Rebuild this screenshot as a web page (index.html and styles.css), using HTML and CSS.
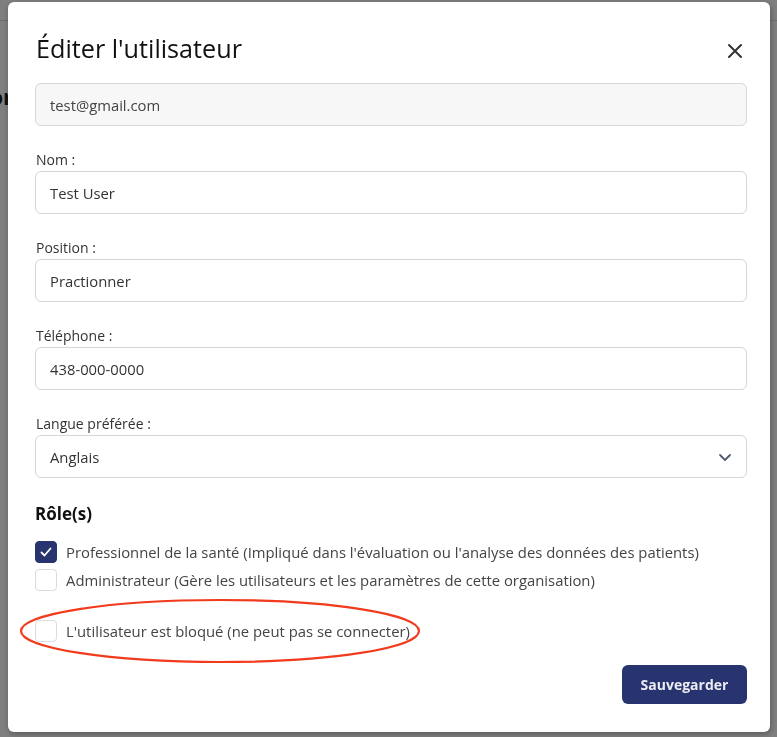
FILE: index.html
```html
<!DOCTYPE html>
<html lang="fr">
<head>
    <meta charset="UTF-8">
    <meta name="viewport" content="width=device-width, initial-scale=1.0">
    <title>Éditer l'utilisateur</title>
    <link rel="stylesheet" href="styles.css">
</head>
<body>
    <div class="page">
        <div class="page-top">Organisation</div>
        <h2 class="page-title">Utilisateurs de l'organisation</h2>
        <p class="page-text">liste des utilisateurs</p>
    </div>

    <div class="backdrop"></div>

    <div class="modal">
        <div class="modal-header">
            <h1>Éditer l'utilisateur</h1>
            <button class="close" aria-label="Fermer">
                <svg width="16" height="16" viewBox="0 0 16 16">
                    <path d="M2 2 L14 14 M14 2 L2 14" stroke="#333" stroke-width="2" stroke-linecap="round"/>
                </svg>
            </button>
        </div>

        <div class="field">
            <div class="input readonly">test@gmail.com</div>
        </div>

        <div class="field">
            <label>Nom :</label>
            <div class="input">Test User</div>
        </div>

        <div class="field">
            <label>Position :</label>
            <div class="input">Practionner</div>
        </div>

        <div class="field">
            <label>Téléphone :</label>
            <div class="input">438-000-0000</div>
        </div>

        <div class="field">
            <label>Langue préférée :</label>
            <div class="input select">
                <span>Anglais</span>
                <svg width="14" height="14" viewBox="0 0 14 14">
                    <path d="M2 5 L7 10 L12 5" fill="none" stroke="#555b6e" stroke-width="1.8" stroke-linecap="round" stroke-linejoin="round"/>
                </svg>
            </div>
        </div>

        <h3 class="roles-title">Rôle(s)</h3>

        <div class="roles">
            <div class="check-row">
                <span class="box checked">
                    <svg width="14" height="14" viewBox="0 0 14 14">
                        <path d="M2.5 7.5 L5.5 10.5 L11.5 3.5" fill="none" stroke="#fff" stroke-width="1.8" stroke-linecap="round" stroke-linejoin="round"/>
                    </svg>
                </span>
                Professionnel de la santé (Impliqué dans l'évaluation ou l'analyse des données des patients)
            </div>
            <div class="check-row">
                <span class="box"></span>
                Administrateur (Gère les utilisateurs et les paramètres de cette organisation)
            </div>
        </div>

        <div class="check-row blocked">
            <span class="box"></span>
            L'utilisateur est bloqué (ne peut pas se connecter)
            <svg class="circle" width="404" height="68" viewBox="0 0 404 68">
                <ellipse cx="202" cy="34" rx="199" ry="31" fill="none" stroke="#f23a1c" stroke-width="2.2"/>
            </svg>
        </div>

        <div class="actions">
            <button class="save">Sauvegarder</button>
        </div>
    </div>
</body>
</html>
```

FILE: styles.css
```css
body {
    margin: 0;
    height: 100vh;
    overflow: hidden;
    background-color: #fff;
    font-family: "Open Sans", "Noto Sans", Arial, sans-serif;
    color: #333;
}

.page {
    margin-left: -190px;
}

.page-top {
    height: 20px;
    border-bottom: 1px solid #ddd;
    font-size: 13px;
    padding-left: 200px;
}

.page-title {
    margin: 60px 0 0;
    font-size: 22px;
    font-weight: 700;
    color: #222;
}

.page-text {
    margin-top: 44px;
    font-size: 15px;
}

.backdrop {
    position: fixed;
    inset: 0;
    background-color: rgba(0, 0, 0, 0.5);
}

.modal {
    position: fixed;
    top: 2px;
    left: 8px;
    width: 762px;
    height: 730px;
    box-sizing: border-box;
    padding: 29px 23px 0 27px;
    background-color: #fff;
    border-radius: 6px;
    box-shadow: 1px 2px 6px rgba(0, 0, 0, 0.3);
}

.modal-header {
    display: flex;
    align-items: center;
    justify-content: space-between;
    margin-bottom: 18px;
}

.modal-header h1 {
    margin: 0;
    font-size: 25.2px;
    font-weight: 400;
    color: #111;
    padding-left: 1px;
}

.close {
    border: none;
    background: none;
    padding: 0;
    margin-right: 4px;
    margin-top: 6px;
    display: flex;
}

.field {
    margin-bottom: 24px;
}

.field label {
    display: block;
    font-size: 14px;
    line-height: 19px;
    color: #333;
    margin-bottom: 2px;
    padding-left: 1px;
}

.input {
    height: 43px;
    box-sizing: border-box;
    border: 1px solid #d6d6dc;
    border-radius: 6px;
    padding: 0 14px;
    display: flex;
    align-items: center;
    font-size: 14.8px;
    color: #333;
}

.input.readonly {
    background-color: #f7f7f8;
    color: #444;
}

.select {
    justify-content: space-between;
}

.roles-title {
    margin: 24px 0 16px;
    font-size: 17px;
    font-weight: 700;
    color: #111;
}

.roles {
    display: flex;
    flex-direction: column;
    gap: 6px;
}

.check-row {
    display: flex;
    align-items: center;
    gap: 9px;
    font-size: 14.85px;
    color: #444;
}

.box {
    width: 22px;
    height: 22px;
    box-sizing: border-box;
    border: 1px solid #dcdcdf;
    border-radius: 4px;
    display: flex;
    align-items: center;
    justify-content: center;
    flex-shrink: 0;
}

.box.checked {
    background-color: #27346f;
    border-color: #27346f;
}

.blocked {
    position: relative;
    margin-top: 29px;
}

.circle {
    position: absolute;
    left: -17px;
    top: -23px;
}

.actions {
    display: flex;
    justify-content: flex-end;
    margin-top: 23px;
}

.save {
    width: 125px;
    height: 39px;
    border: none;
    border-radius: 6px;
    background-color: #27346f;
    color: #ebebf2;
    font-family: inherit;
    font-size: 14px;
    font-weight: 700;
}
```
